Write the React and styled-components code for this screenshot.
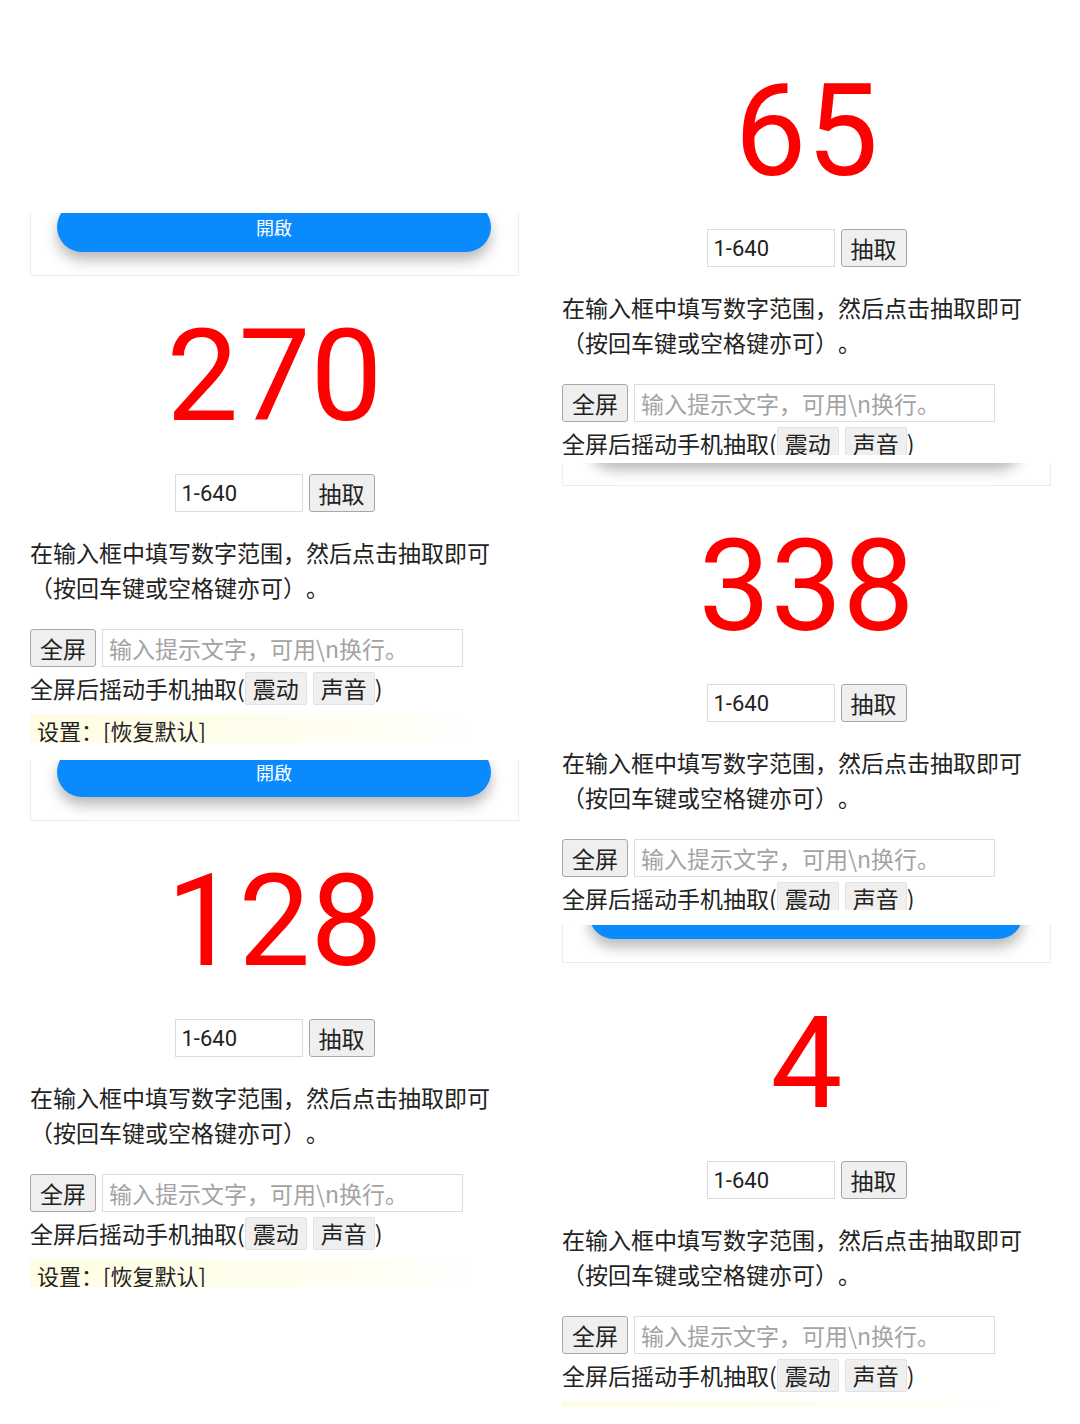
import styled, { createGlobalStyle } from 'styled-components';

const GlobalStyle = createGlobalStyle`
  html, body {
    margin: 0;
    padding: 0;
    background: #fff;
  }
  body {
    font-family: "Noto Sans CJK SC", "Noto Sans", sans-serif;
    color: #222;
    text-spacing-trim: space-all;
  }
`;

const Page = styled.div`
  width: 1080px;
  height: 1424px;
  overflow: hidden;
  box-sizing: border-box;
  padding-left: 30px;
  display: grid;
  grid-template-columns: 489px 489px;
  column-gap: 43px;
  align-items: start;
`;

const Column = styled.div`
  display: flex;
  flex-direction: column;
`;

const Spacer = styled.div`
  height: ${(p) => p.$h}px;
  flex: none;
`;

const Clip = styled.div`
  height: ${(p) => p.$h}px;
  overflow: hidden;
  flex: none;
  display: flex;
  flex-direction: column;
  justify-content: ${(p) => (p.$bottom ? 'flex-end' : 'flex-start')};
`;

const Card = styled.div`
  border: 1px solid #ececec;
  border-top: none;
  padding: 0 27px 23px 26px;
  background: #fff;
`;

const OpenButton = styled.button`
  display: block;
  width: 100%;
  height: 50px;
  border: none;
  border-radius: 25px;
  background: #0a8bfd;
  color: #fff;
  font-family: "Noto Sans CJK TC", "Noto Sans CJK SC", sans-serif;
  font-size: 18px;
  box-shadow: 0 8px 14px rgba(0, 0, 0, 0.28);
  padding: 0;
`;

const BigNumber = styled.div`
  margin-top: 35px;
  height: 130px;
  font-family: Roboto, "Liberation Sans", sans-serif;
  font-size: 128px;
  line-height: 130px;
  color: #ff0000;
  text-align: center;
`;

const RangeRow = styled.div`
  margin-top: 33px;
  display: flex;
  justify-content: center;
  gap: 6px;
  height: 38px;
`;

const RangeInput = styled.input`
  width: 128px;
  height: 38px;
  box-sizing: border-box;
  border: 1px solid #dcdcdc;
  padding: 0 6px;
  font-family: Roboto, "Noto Sans", sans-serif;
  font-size: 22px;
  color: #222;
  outline: none;
`;

const GrayButton = styled.button`
  height: 38px;
  box-sizing: border-box;
  padding: 0 9px;
  border: 1px solid #a8a8a8;
  border-radius: 3px;
  background: #efefef;
  font-family: "Noto Sans CJK SC", sans-serif;
  font-size: 23px;
  color: #222;
  line-height: 1;
`;

const Hint = styled.p`
  margin: 23px 0 0;
  font-size: 23px;
  line-height: 35px;
  color: #222;
  text-spacing-trim: space-all;
`;

const ControlRow = styled.div`
  margin-top: 24px;
  display: flex;
  gap: 6px;
  height: 38px;
`;

const PromptInput = styled.input`
  width: 361px;
  height: 38px;
  box-sizing: border-box;
  border: 1px solid #dcdcdc;
  padding: 0 6px;
  font-family: "Noto Sans CJK SC", sans-serif;
  font-size: 23px;
  text-spacing-trim: space-all;
  outline: none;
  &::placeholder {
    color: #a3a3a3;
  }
`;

const ShakeLine = styled.div`
  margin-top: 4px;
  height: 35px;
  display: flex;
  align-items: center;
  font-size: 23px;
  line-height: 35px;
  white-space: nowrap;
`;

const ToggleButton = styled.button`
  height: 33px;
  box-sizing: border-box;
  padding: 0 7px;
  margin-right: ${(p) => (p.$last ? 0 : 6)}px;
  border: 1px solid #e2e2e2;
  border-radius: 2px;
  background: #efefef;
  font-family: "Noto Sans CJK SC", sans-serif;
  font-size: 23px;
  color: #222;
  line-height: 1;
`;

const SettingsBar = styled.div`
  margin-top: 8px;
  width: 440px;
  height: 36px;
  box-sizing: border-box;
  padding-left: 7px;
  display: flex;
  align-items: center;
  font-size: 22px;
  color: #222;
  background: linear-gradient(to right, #fffde2, #fffef2 75%, rgba(255, 255, 255, 0));
`;

const CardSlice = ({ h, label = '開啟' }) => (
  <Clip $h={h} $bottom>
    <Card>
      <OpenButton>{label}</OpenButton>
    </Card>
  </Clip>
);

const Picker = ({ h, value }) => (
  <Clip $h={h}>
    <BigNumber>{value}</BigNumber>
    <RangeRow>
      <RangeInput defaultValue="1-640" />
      <GrayButton>抽取</GrayButton>
    </RangeRow>
    <Hint>
      在输入框中填写数字范围，然后点击抽取即可
      <br />
      （按回车键或空格键亦可）。
    </Hint>
    <ControlRow>
      <GrayButton>全屏</GrayButton>
      <PromptInput placeholder="输入提示文字，可用\n换行。" />
    </ControlRow>
    <ShakeLine>
      全屏后摇动手机抽取(
      <ToggleButton>震动</ToggleButton>
      <ToggleButton $last>声音</ToggleButton>)
    </ShakeLine>
    <SettingsBar>设置：[恢复默认]</SettingsBar>
  </Clip>
);

export default function App() {
  return (
    <>
      <GlobalStyle />
      <Page>
        <Column>
          <Spacer $h={213} />
          <CardSlice h={63} />
          <Picker h={467} value="270" />
          <Spacer $h={17} />
          <CardSlice h={61} />
          <Picker h={466} value="128" />
        </Column>
        <Column>
          <Spacer $h={31} />
          <Picker h={424} value="65" />
          <Spacer $h={8} />
          <CardSlice h={23} />
          <Picker h={424} value="338" />
          <Spacer $h={15} />
          <CardSlice h={38} />
          <Picker h={444} value="4" />
        </Column>
      </Page>
    </>
  );
}
